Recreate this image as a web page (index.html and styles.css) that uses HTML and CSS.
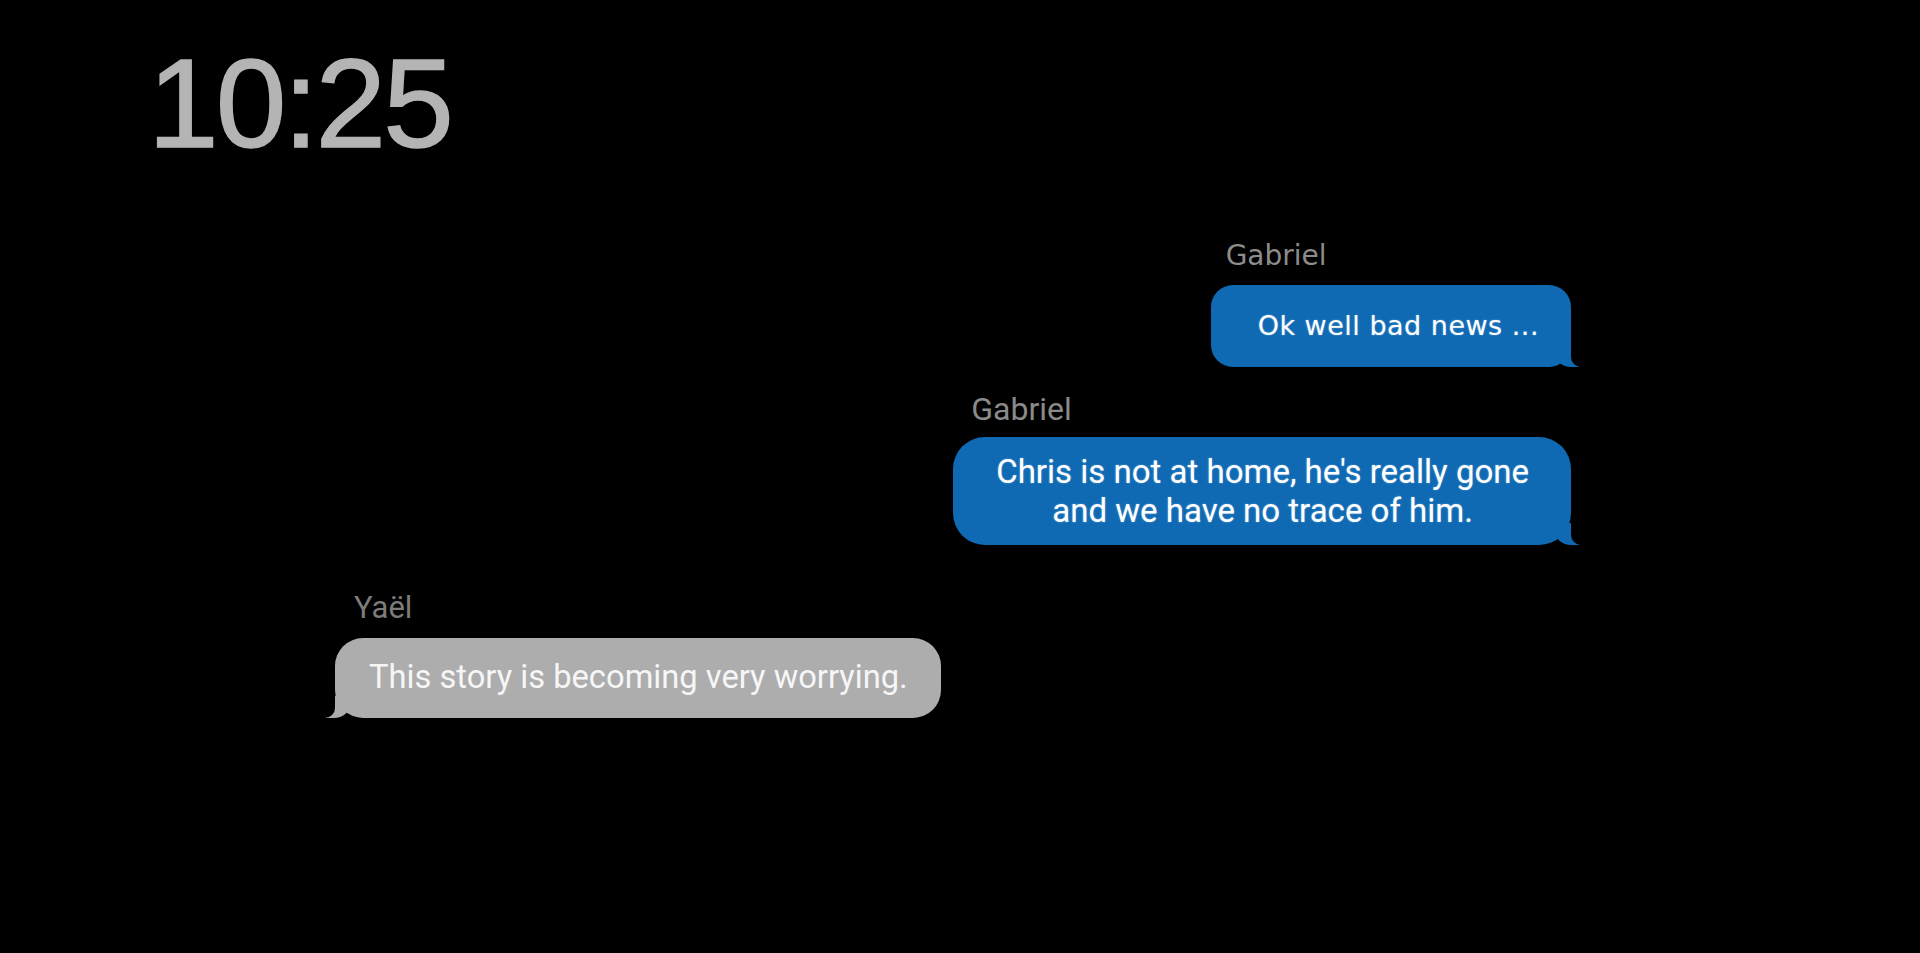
FILE: index.html
```html
<!DOCTYPE html>
<html lang="en">
<head>
<meta charset="utf-8">
<title>Messages</title>
<link rel="stylesheet" href="styles.css">
</head>
<body>
<main class="screen">
  <div class="clock">10:25</div>
  <section class="thread">
    <div class="msg msg--out msg--first">
      <div class="msg__name msg__name--wide">Gabriel</div>
      <div class="bubble bubble--blue bubble--wide">Ok well bad news ...</div>
    </div>
    <div class="msg msg--out msg--second">
      <div class="msg__name">Gabriel</div>
      <div class="bubble bubble--blue bubble--two">Chris is not at home, he's really gone<br>and we have no trace of him.</div>
    </div>
    <div class="msg msg--in msg--third">
      <div class="msg__name msg__name--in">Yaël</div>
      <div class="bubble bubble--gray">This story is becoming very worrying.</div>
    </div>
  </section>
</main>
</body>
</html>
```
FILE: styles.css
```css
html, body {
  margin: 0;
  padding: 0;
  background: #000;
}

body {
  width: 1920px;
  height: 953px;
  overflow: hidden;
  font-family: "Roboto", "Liberation Sans", sans-serif;
}

.screen {
  padding: 40px 0 0 148px;
  box-sizing: border-box;
  height: 953px;
}

.clock {
  font-family: "Liberation Sans", Arial, sans-serif;
  font-size: 127px;
  line-height: 127px;
  letter-spacing: -3px;
  color: #b4b4b4;
  -webkit-text-stroke: 1.5px #b4b4b4;
}

.thread {
  display: flex;
  flex-direction: column;
  margin-top: 72px;
  padding: 0 349px 0 187px;
}

.msg {
  display: flex;
  flex-direction: column;
}

.msg--out {
  align-self: flex-end;
}

.msg--in {
  align-self: flex-start;
}

.msg__name {
  font-family: "Roboto", sans-serif;
  font-size: 32px;
  line-height: 38px;
  color: #8a8a8a;
  padding-left: 18px;
  margin-bottom: 9px;
}

.msg__name--wide {
  font-family: "DejaVu Sans", sans-serif;
  font-size: 28px;
  line-height: 34px;
  color: #8c8c8c;
  padding-left: 15px;
  margin-bottom: 12px;
}

.msg__name--in {
  font-size: 31px;
  color: #7c7c7c;
  padding-left: 19px;
  margin-bottom: 11px;
}

.msg--second {
  margin-top: 23px;
}

.msg--third {
  margin-top: 44px;
}

.bubble {
  position: relative;
  border-radius: 26px;
  font-family: "Roboto", sans-serif;
  font-size: 33px;
  line-height: 39px;
  color: #fff;
  text-align: center;
}

.bubble--blue {
  background: #0f6ab3;
  text-shadow: 0 0 2px rgba(190, 225, 255, 0.5);
}

.bubble--wide {
  font-family: "DejaVu Sans", sans-serif;
  font-size: 27px;
  line-height: 34px;
  letter-spacing: 0.5px;
  padding: 24px 32px 24px 47px;
  border-radius: 22px;
  text-align: left;
}

.bubble--two {
  padding: 15px 42px 15px 43px;
  border-radius: 32px;
}

.bubble--gray {
  background: #adadad;
  color: #f6f6f6;
  font-size: 32.7px;
  padding: 20px 33px 21px 34px;
  border-radius: 28px;
}

/* message tails */
.bubble::before,
.bubble::after {
  content: "";
  position: absolute;
  bottom: 0;
  height: 22px;
}

.bubble--blue::before {
  right: -8px;
  width: 24px;
  background: #0f6ab3;
  border-bottom-left-radius: 16px 14px;
}

.bubble--blue::after {
  right: -26px;
  width: 26px;
  background: #000;
  border-bottom-left-radius: 10px;
}

.bubble--gray::before {
  left: -10px;
  width: 25px;
  background: #adadad;
  border-bottom-right-radius: 16px 14px;
}

.bubble--gray::after {
  left: -26px;
  width: 26px;
  background: #000;
  border-bottom-right-radius: 10px;
}
```
